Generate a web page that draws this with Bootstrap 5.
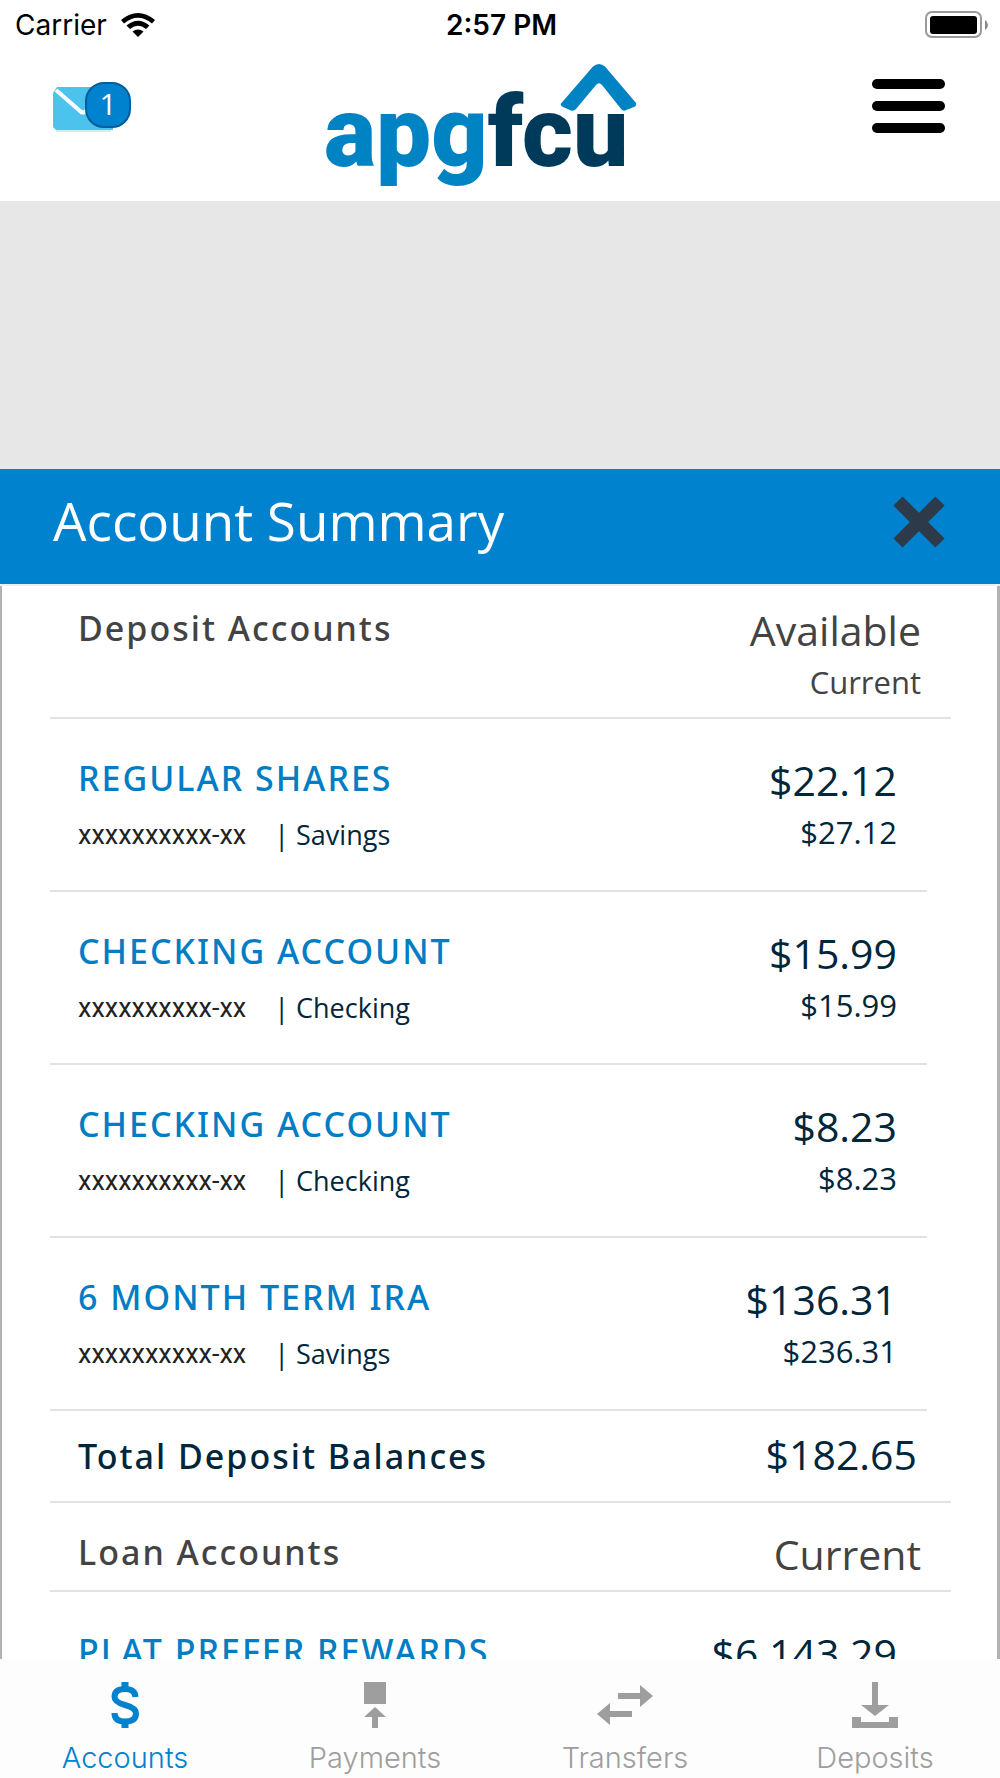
<!DOCTYPE html>
<html lang="en">
<head>
<meta charset="utf-8">
<meta name="viewport" content="width=device-width, initial-scale=1">
<title>Account Summary</title>
<link href="https://cdn.jsdelivr.net/npm/bootstrap@5.3.0/dist/css/bootstrap.min.css" rel="stylesheet">
<style>
body { font-family: "Open Sans", "Noto Sans", sans-serif; color: #00263b; background: #fff; }
.status-bar { height: 50px; padding: 0 12px 0 15px; font: 400 28px/50px Inter, sans-serif; color: #000; }
.status-left { gap: 14px; }
.status-time { font-weight: 600; }
.app-header { height: 151px; padding: 0 55px 0 53px; background: #fff; }
.mail-link { width: 79px; height: 52px; margin-bottom: 36px; }
.mail-count { left: 32px; top: 0; width: 46px; height: 46px; border: 2px solid #005f9b; border-radius: 19px; background: #0082ce; color: #fff; font-size: 30px; line-height: 40px; }
.brand-mark { overflow: visible; }
.brand-word { font: 900 98px Roboto, sans-serif; }
.menu-btn { margin-bottom: 40px; gap: 12px; }
.menu-btn i { display: block; width: 73px; height: 10px; border-radius: 5px; background: #000; }
.hero-space { height: 268px; background: #e7e7e7; }
.panel-title { height: 115px; padding: 0 53px; background: #0082ce; color: #fff; }
.panel-title h1 { font-size: 53px; line-height: 72px; font-weight: 400; padding-bottom: 12px; }
.panel-title button { padding-bottom: 10px; }
.panel-content { min-height: 0; border: solid #b2b2b2; border-width: 0 3px 0 2px; padding: 0 46px 0 48px; }
.panel-edge { height: 2px; background: #eeeeee; }
.line-below { border-bottom: 2px solid #e2e2e2; padding-left: 28px; }
.group-head { color: #434343; padding-right: 30px; }
.head-deposit { height: 133px; padding-top: 19px; }
.head-loan { height: 89px; padding-top: 26px; }
.label-text { font-family: "Noto Sans", sans-serif; font-size: 34px; line-height: 46px; font-weight: 500; letter-spacing: 2px; white-space: nowrap; }
.amount { font-size: 41px; line-height: 50px; }
.amount-minor { font-size: 31px; line-height: 54px; }
.acct-row { height: 173px; margin-right: 24px; padding-top: 36px; padding-right: 30px; }
.acct-row a { color: #007dc3; text-decoration: none; }
.acct-meta { font-size: 27px; line-height: 40px; margin-top: 14px; gap: 28px; }
.acct-mask { color: #222; font-family: Roboto, sans-serif; }
.total-row { height: 92px; padding-right: 34px; }
.total-row .amount { margin-bottom: 4px; }
.tab-bar { height: 119px; background: #fdfdfd; font: 300 29px/36px Inter, sans-serif; }
.tab-bar a { color: #9e9e9e; text-decoration: none; padding-top: 22px; }
.tab-bar a.active { color: #0082ce; }
.tab-bar svg { display: block; margin: 0 auto 11px; }
</style>
<script src="https://cdn.jsdelivr.net/npm/bootstrap@5.3.0/dist/js/bootstrap.bundle.min.js"></script>
</head>
<body>
<div class="vh-100 d-flex flex-column overflow-hidden">
  <div class="status-bar row g-0 flex-shrink-0">
    <div class="status-left col d-flex align-items-center">
      <span>Carrier</span>
      <svg width="34" height="25" viewBox="0 0 34 25" aria-hidden="true"><path d="M0 7Q17-7 34 7L31 10.500Q17-1 3 10.500ZM5.500 12.500Q17 3 28.500 12.500L25 16Q17 9.500 9 16ZM11.500 18.500Q17 14.500 22.500 18.500L17 24Z" fill="#000"/></svg>
    </div>
    <div class="col-auto status-time">2:57 PM</div>
    <div class="col d-flex align-items-center justify-content-end">
      <svg width="63" height="28" viewBox="0 0 63 28" aria-label="Battery full"><rect x="1" y="1" width="55" height="25" rx="6" fill="#fff" stroke="#999" stroke-width="2"/><rect x="5" y="5" width="47" height="18" rx="3"/><path d="M60 9q3 2 3 5t-3 5z" fill="#888"/></svg>
    </div>
  </div>

  <header class="app-header d-flex align-items-center justify-content-between flex-shrink-0">
    <a href="#" class="mail-link position-relative d-block" aria-label="Messages">
      <svg width="60" height="52" viewBox="0 0 60 52" aria-hidden="true"><path d="M4 5H60V48H3L0 45V11Z" fill="#4cc3ed"/><path d="M2 48H58V50H4Z" fill="#c9effb"/><path d="M3 8L27 29Q30 32 33 29L58 8" fill="none" stroke="#fff" stroke-width="4"/></svg>
      <span class="mail-count position-absolute text-center">1</span>
    </a>
    <svg class="brand-mark" width="352" height="151" viewBox="0 0 352 151" role="img" aria-label="apgfcu">
      <text class="brand-word" x="-2" y="116" fill="#0083c2">apg<tspan fill="#003a5a">fcu</tspan></text>
      <path d="M235 53.500L267 16.500Q273 11.500 279 16.500L310 53Q311 55.500 308 57L299 60.500Q297 61 295.500 59.500L276 35Q273 31.500 270 35L250 59Q248 61.500 245 60.500L237 57Q234 55.500 235 53.500Z" fill="#0083c2"/>
    </svg>
    <button type="button" class="menu-btn btn border-0 p-0 d-grid" aria-label="Menu"><i></i><i></i><i></i></button>
  </header>

  <div class="hero-space flex-shrink-0"></div>

  <div class="panel-title d-flex align-items-center justify-content-between flex-shrink-0">
    <h1 class="m-0">Account Summary</h1>
    <button type="button" class="btn border-0 px-0 pt-0" aria-label="Close">
      <svg width="55" height="54" viewBox="0 0 55 54" aria-hidden="true"><path d="M6 6L48 48M48 6L6 48" stroke="#2d3a49" stroke-width="13"/></svg>
    </button>
  </div>
  <div class="panel-edge flex-shrink-0"></div>

  <main class="panel-content flex-grow-1 overflow-hidden">
    <section>
      <div class="group-head head-deposit line-below d-flex justify-content-between">
        <h2 class="label-text m-0">Deposit Accounts</h2>
        <div class="text-end"><div class="amount">Available</div><div class="amount-minor">Current</div></div>
      </div>
      <ul class="list-unstyled m-0">
        <li class="acct-row line-below d-flex justify-content-between">
          <div><a href="#" class="label-text d-block">REGULAR SHARES</a><div class="acct-meta d-flex"><span class="acct-mask">xxxxxxxxxx-xx</span><span>| Savings</span></div></div>
          <div class="text-end"><div class="amount">$22.12</div><div class="amount-minor">$27.12</div></div>
        </li>
        <li class="acct-row line-below d-flex justify-content-between">
          <div><a href="#" class="label-text d-block">CHECKING ACCOUNT</a><div class="acct-meta d-flex"><span class="acct-mask">xxxxxxxxxx-xx</span><span>| Checking</span></div></div>
          <div class="text-end"><div class="amount">$15.99</div><div class="amount-minor">$15.99</div></div>
        </li>
        <li class="acct-row line-below d-flex justify-content-between">
          <div><a href="#" class="label-text d-block">CHECKING ACCOUNT</a><div class="acct-meta d-flex"><span class="acct-mask">xxxxxxxxxx-xx</span><span>| Checking</span></div></div>
          <div class="text-end"><div class="amount">$8.23</div><div class="amount-minor">$8.23</div></div>
        </li>
        <li class="acct-row line-below d-flex justify-content-between">
          <div><a href="#" class="label-text d-block">6 MONTH TERM IRA</a><div class="acct-meta d-flex"><span class="acct-mask">xxxxxxxxxx-xx</span><span>| Savings</span></div></div>
          <div class="text-end"><div class="amount">$136.31</div><div class="amount-minor">$236.31</div></div>
        </li>
      </ul>
      <div class="total-row line-below d-flex justify-content-between align-items-center">
        <span class="label-text">Total Deposit Balances</span><span class="amount">$182.65</span>
      </div>
    </section>
    <section>
      <div class="group-head head-loan line-below d-flex justify-content-between">
        <h2 class="label-text m-0">Loan Accounts</h2>
        <div class="amount">Current</div>
      </div>
      <ul class="list-unstyled m-0">
        <li class="acct-row line-below d-flex justify-content-between">
          <a href="#" class="label-text">PLAT PREFER REWARDS</a>
          <div class="amount">$6,143.29</div>
        </li>
      </ul>
    </section>
  </main>

  <nav class="tab-bar row g-0 text-center flex-shrink-0">
    <a href="#" class="col active" aria-current="page">
      <svg width="48" height="48" viewBox="0 0 48 48" aria-hidden="true"><path d="M20.500 1h7v6h-7zM20.500 40h7v7h-7z" fill="currentColor"/><path d="M34.500 16Q34 8 24 8Q13.500 8 13.500 16Q13.500 21 24 24Q35 27 35 32.500Q35 40.500 24 40.500Q13.500 40.500 13.500 32" fill="none" stroke="currentColor" stroke-width="6"/></svg>
      Accounts</a>
    <a href="#" class="col">
      <svg width="48" height="48" viewBox="0 0 48 48" aria-hidden="true"><path d="M13 1H35V23H13ZM24 26L35 36H27V47H21V36H13Z" fill="currentColor"/></svg>
      Payments</a>
    <a href="#" class="col">
      <svg width="56" height="48" viewBox="0 0 56 48" aria-hidden="true"><path d="M21 12H43V4L56 15L43 26V18H21ZM35 30H13V22L0 33L13 44V36H35Z" fill="currentColor"/></svg>
      Transfers</a>
    <a href="#" class="col">
      <svg width="48" height="48" viewBox="0 0 48 48" aria-hidden="true"><path d="M21 1H27V24H38L24 35L10 24H21ZM1 36H10V41H38V36H47V47H1Z" fill="currentColor"/></svg>
      Deposits</a>
  </nav>
</div>
</body>
</html>
